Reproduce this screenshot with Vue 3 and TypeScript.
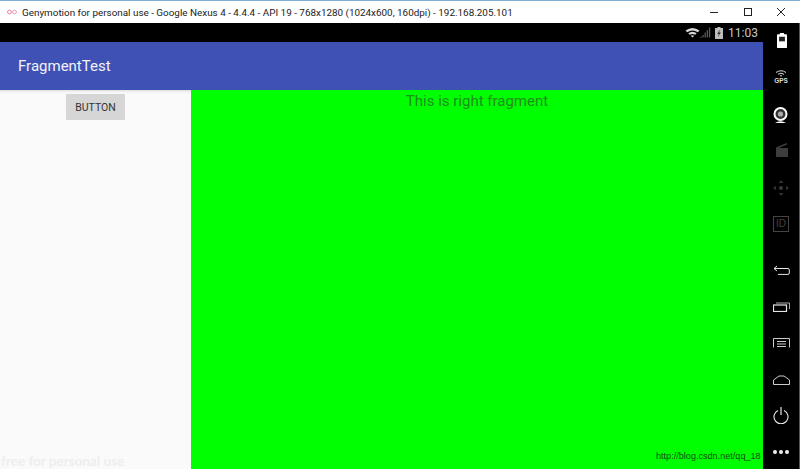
<script setup lang="ts">
const title = 'Genymotion for personal use - Google Nexus 4 - 4.4.4 - API 19 - 768x1280 (1024x600, 160dpi) - 192.168.205.101';
</script>

<template>
  <div class="window">
    <div class="titlebar">
      <svg class="logo" width="10" height="6" viewBox="0 0 10 6">
        <circle cx="2.500" cy="3" r="1.900" fill="none" stroke="#e8799f" stroke-width="1" />
        <circle cx="7.500" cy="3" r="1.900" fill="none" stroke="#e8a0b8" stroke-width="1" />
      </svg>
      <span class="title">{{ title }}</span>
      <div class="controls">
        <svg width="10" height="10" viewBox="0 0 10 10"><path d="M0 5.500h8" stroke="#222" fill="none" /></svg>
        <svg width="10" height="10" viewBox="0 0 10 10"><rect x="1.500" y="1.500" width="7" height="7" stroke="#222" fill="none" /></svg>
        <svg width="10" height="10" viewBox="0 0 10 10"><path d="M1 1l8 8M9 1l-8 8" stroke="#222" fill="none" /></svg>
      </div>
    </div>
    <div class="body">
      <div class="device">
        <div class="statusbar">
          <svg width="15" height="11" viewBox="0 0 15 11">
            <path d="M0.500 3.500Q7.500-1.500 14.500 3.500L12.800 5.300Q7.500 1.500 2.200 5.300Z" fill="#d8d8d8" />
            <path d="M3.300 6.300Q7.500 3.200 11.700 6.300L10.200 7.800Q7.500 6 4.800 7.800Z" fill="#d8d8d8" />
            <path d="M5.800 8.700Q7.500 7.600 9.200 8.700L7.500 10.500Z" fill="#d8d8d8" />
          </svg>
          <svg class="signal" width="11" height="11" viewBox="0 0 11 11">
            <path d="M0.500 10.500h1M3 10.500V8M5.200 10.500V5.500M7.400 10.500V3M9.600 10.500V0.500" stroke="#5a5a5a" stroke-width="1.300" fill="none" />
          </svg>
          <svg class="battery" width="8" height="12" viewBox="0 0 8 12">
            <path d="M2.500 0h3v1H8v11H0V1h2.500Z" fill="#bdbdbd" />
            <path d="M4.800 2.500L2.300 7h1.500L3 10l2.800-4.500H4.200Z" fill="#333" />
          </svg>
          <span class="clock">11:03</span>
        </div>
        <div class="appbar">FragmentTest</div>
        <div class="content">
          <div class="left">
            <button class="btn">BUTTON</button>
          </div>
          <div class="right">
            <p class="fragment-text">This is right fragment</p>
            <span class="blog-mark">http://blog.csdn.net/qq_18</span>
          </div>
          <span class="free-mark">free for personal use</span>
        </div>
      </div>
      <div class="sidebar">
        <svg class="tool t-battery" width="10" height="15" viewBox="0 0 12 18">
          <path d="M3.500 0h5v1.500H11q1 0 1 1V17q0 1-1 1H1q-1 0-1-1V2.500q0-1 1-1h2.500Z" fill="#fff" />
          <rect x="2.500" y="4.500" width="7" height="5.500" fill="#222" />
        </svg>
        <div class="tool t-gps">
          <svg width="12" height="7" viewBox="0 0 12 7">
            <path d="M1 2.500Q6-1 11 2.500M3 4.300Q6 2 9 4.300M5 6Q6 5.300 7 6" stroke="#ddd" stroke-width="1" fill="none" />
          </svg>
          <span class="gps-label">GPS</span>
        </div>
        <svg class="tool t-cam" width="15" height="17" viewBox="0 0 15 17">
          <circle cx="7.500" cy="7" r="6" fill="#333" stroke="#fff" stroke-width="2" />
          <circle cx="7.500" cy="7" r="2.600" fill="#aaa" />
          <path d="M2 16q5.500-3.500 11 0Z" fill="#fff" />
        </svg>
        <svg class="tool t-clap" width="13" height="14" viewBox="0 0 13 14">
          <path d="M1 5h12v9H1Z" fill="#3d3d3d" />
          <path d="M1 4.500L11.500 0l.6 1.600L1.600 6Z" fill="#3d3d3d" />
        </svg>
        <svg class="tool t-dpad" width="16" height="16" viewBox="0 0 16 16">
          <circle cx="8" cy="8" r="2" fill="#3a3a3a" />
          <path d="M8 0l2.300 3H5.700ZM8 16l2.300-3H5.700ZM0 8l3-2.300v4.600ZM16 8l-3-2.300v4.600Z" fill="#333" />
        </svg>
        <div class="tool t-id">ID</div>
        <svg class="tool t-back" width="17" height="10" viewBox="0 0 17 10">
          <path d="M4 1L1 3.500 4 6M1 3.500H15Q16.300 3.500 16.300 5V8Q16.300 9.400 15 9.400H5" stroke="#e4e4e4" stroke-width="1" fill="none" />
        </svg>
        <svg class="tool t-recent" width="17" height="10" viewBox="0 0 17 10">
          <rect x="0.500" y="3" width="13" height="6.500" stroke="#e4e4e4" stroke-width="1.200" fill="none" />
          <path d="M3 1H16.500V7" stroke="#aaa" stroke-width="1" fill="none" />
        </svg>
        <svg class="tool t-menu" width="17" height="10" viewBox="0 0 17 10">
          <path d="M0.500 9.500V0.500H16.500V9.500" stroke="#ccc" stroke-width="1" fill="none" />
          <path d="M4 3.500h9M4 6h9M4 8.500h9" stroke="#ccc" stroke-width="1" fill="none" />
        </svg>
        <svg class="tool t-home" width="17" height="10" viewBox="0 0 17 10">
          <path d="M0.500 5L6 1H11L16.500 5V9.500H0.500Z" stroke="#ccc" stroke-width="1" fill="none" />
        </svg>
        <svg class="tool t-power" width="16" height="17" viewBox="0 0 16 17">
          <path d="M5 3.500A7 7 0 1 0 11 3.500" stroke="#e8e8e8" stroke-width="1.100" fill="none" />
          <path d="M8 0V8" stroke="#e8e8e8" stroke-width="1.200" fill="none" />
        </svg>
        <div class="tool t-more"><i></i><i></i><i></i></div>
      </div>
    </div>
  </div>
</template>

<style scoped>
.window {
  width: 800px;
  height: 469px;
  display: flex;
  flex-direction: column;
  overflow: hidden;
  font-family: "Noto Sans", sans-serif;
  background: #000;
}

.titlebar {
  height: 23px;
  flex: none;
  box-sizing: border-box;
  border-top: 1px solid #7eb0d6;
  background: #fff;
  display: flex;
  align-items: center;
  padding-left: 7px;
  position: relative;
}
.logo { margin-right: 5px; }
.title {
  font-family: Roboto, sans-serif;
  font-size: 9.900px;
  color: #222;
  white-space: nowrap;
}
.controls {
  position: absolute;
  right: 0;
  top: 6px;
  display: flex;
  gap: 23px;
  padding-right: 14px;
}

.body {
  flex: 1;
  display: flex;
  min-height: 0;
  border-right: 1px solid #3a5f7d;
}

.device {
  width: 763px;
  flex: none;
  display: flex;
  flex-direction: column;
}

.statusbar {
  height: 19px;
  flex: none;
  display: flex;
  align-items: center;
  justify-content: flex-end;
  padding-right: 5px;
  box-sizing: border-box;
}
.signal { margin-left: 0; }
.battery { margin-left: 4px; margin-right: 5px; }
.clock {
  font-family: Roboto, sans-serif;
  font-size: 12px;
  color: #c8c8c8;
}

.appbar {
  height: 48px;
  flex: none;
  background: #3f51b5;
  color: #f2f2f8;
  font-family: Roboto, sans-serif;
  font-size: 15px;
  display: flex;
  align-items: center;
  padding-left: 18px;
}

.content {
  flex: 1;
  display: flex;
  position: relative;
  min-height: 0;
}

.left {
  width: 191px;
  flex: none;
  background: #fafafa;
  box-shadow: inset 0 3px 3px -2px #d8d8d8;
  padding: 4px 0 0 66px;
  box-sizing: border-box;
}
.btn {
  display: block;
  width: 59px;
  height: 26px;
  padding: 0;
  border: none;
  border-radius: 1px;
  background: #d6d6d6;
  color: #333;
  font-family: Roboto, sans-serif;
  font-size: 10.500px;
}

.right {
  flex: 1;
  background: #00ff00;
  position: relative;
  overflow: hidden;
  min-width: 0;
}
.fragment-text {
  margin: 1px 0 0;
  text-align: center;
  font-family: Roboto, sans-serif;
  font-size: 15px;
  line-height: 20px;
  color: #1e8f1e;
}
.blog-mark {
  position: absolute;
  left: 465px;
  top: 360px;
  font-family: "Liberation Sans", sans-serif;
  font-size: 9.100px;
  line-height: 12px;
  color: #0f4f0f;
  white-space: nowrap;
}
.free-mark {
  position: absolute;
  left: 1px;
  bottom: 0;
  font-family: Lato, sans-serif;
  font-weight: 700;
  font-size: 13.500px;
  line-height: 16px;
  color: #eceef0;
  white-space: nowrap;
}

.sidebar {
  flex: 1;
  position: relative;
  background: #000;
}
.tool {
  position: absolute;
  display: block;
}
.t-battery { left: 14px; top: 10px; }
.t-gps { left: 9px; top: 47px; width: 18px; display: flex; flex-direction: column; align-items: center; }
.gps-label {
  font-family: "Liberation Sans", sans-serif;
  font-weight: 700;
  font-size: 6.500px;
  line-height: 7px;
  color: #ddd;
}
.t-cam { left: 10px; top: 84px; }
.t-clap { left: 12px; top: 120px; }
.t-dpad { left: 10px; top: 157px; }
.t-id {
  left: 10px;
  top: 193px;
  width: 16px;
  height: 16px;
  box-sizing: border-box;
  border: 1px solid #444;
  color: #444;
  font-family: "Liberation Sans", sans-serif;
  font-size: 10px;
  line-height: 14px;
  text-align: center;
}
.t-back { left: 10px; top: 242px; }
.t-recent { left: 10px; top: 279px; }
.t-menu { left: 10px; top: 315px; }
.t-home { left: 10px; top: 352px; }
.t-power { left: 10px; top: 384px; }
.t-more { left: 10px; top: 427px; display: flex; gap: 2px; }
.t-more i {
  display: block;
  width: 4px;
  height: 4px;
  border-radius: 50%;
  background: #f0f0f0;
}
</style>

<style>
html, body { margin: 0; background: #000; }
</style>
